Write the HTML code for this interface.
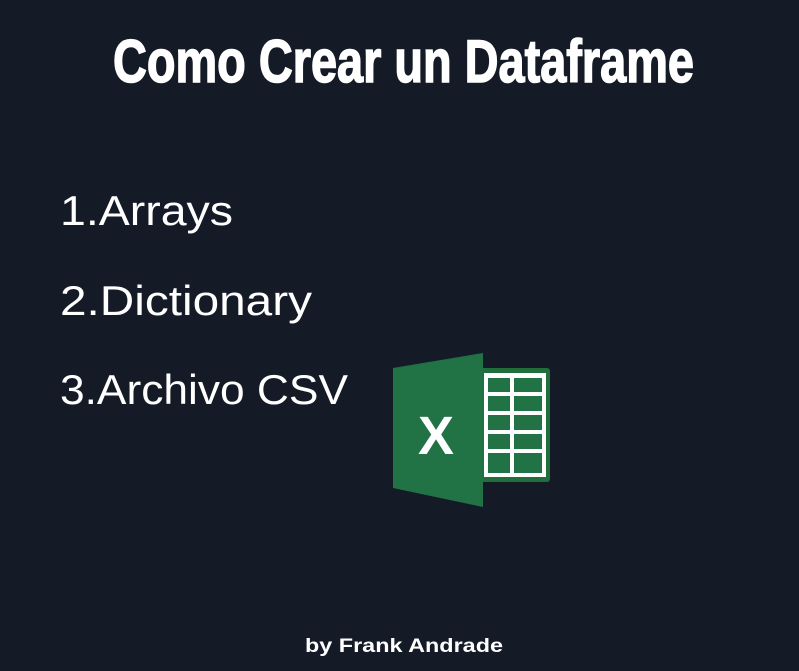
<!DOCTYPE html>
<html><head><style>
html,body{margin:0;padding:0;background:#141b27;}
svg{display:block}
</style></head><body>
<svg width="799" height="671" viewBox="0 0 799 671" xmlns="http://www.w3.org/2000/svg">
<rect width="799" height="671" fill="#141b27"/>
<text x="113" y="82" font-family="Liberation Sans, sans-serif" font-weight="bold" font-size="60" fill="#fff" stroke="#fff" stroke-width="1.5" textLength="581" lengthAdjust="spacingAndGlyphs">Como Crear un Dataframe</text>
<g font-family="Liberation Sans, sans-serif" font-size="42" fill="#ffffff">
<text x="60" y="225" textLength="173" lengthAdjust="spacingAndGlyphs">1.Arrays</text>
<text x="60" y="315" textLength="252" lengthAdjust="spacingAndGlyphs">2.Dictionary</text>
<text x="60" y="404" textLength="288" lengthAdjust="spacingAndGlyphs">3.Archivo CSV</text>
</g>
<rect x="478" y="368" width="72" height="114" rx="3" fill="#1f6e3c"/>
<rect x="484" y="373" width="62" height="104" fill="#fff"/>
<g fill="#217346">
<rect x="488" y="378" width="22" height="14"/><rect x="514" y="378" width="28" height="14"/>
<rect x="488" y="396" width="22" height="15"/><rect x="514" y="396" width="28" height="15"/>
<rect x="488" y="415" width="22" height="15"/><rect x="514" y="415" width="28" height="15"/>
<rect x="488" y="434" width="22" height="15"/><rect x="514" y="434" width="28" height="15"/>
<rect x="488" y="453" width="22" height="20"/><rect x="514" y="453" width="28" height="20"/>
</g>
<polygon points="393,368 483,353 483,507 393,488" fill="#217346"/>
<text x="436" y="454" text-anchor="middle" font-family="Liberation Sans, sans-serif" font-weight="bold" font-size="54" fill="#fff" textLength="36" lengthAdjust="spacingAndGlyphs">X</text>
<text x="305" y="652" font-family="Liberation Sans, sans-serif" font-weight="bold" font-size="19" fill="#fff" textLength="198" lengthAdjust="spacingAndGlyphs">by Frank Andrade</text>
</svg>
</body></html>
